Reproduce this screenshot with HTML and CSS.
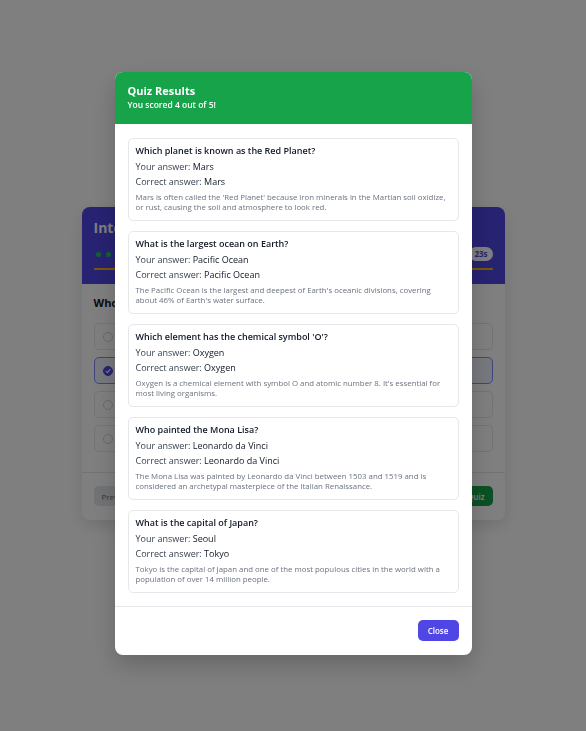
FILE: index.html
```html
<!DOCTYPE html>
<html lang="en">
<head>
<meta charset="utf-8">
<title>Quiz</title>
<link rel="stylesheet" href="styles.css">
</head>
<body>
<div class="page">
  <div class="quiz">
    <div class="quiz-head">
      <div class="quiz-title">Interactive Quiz</div>
      <div class="quiz-meta">
        <div class="dots">
          <span class="dot done"></span><span class="dot done"></span><span class="dot done"></span><span class="dot cur"></span><span class="dot"></span>
        </div>
        <span class="timer">23s</span>
      </div>
      <div class="timebar"><div class="timebar-fill"></div></div>
    </div>
    <div class="quiz-body">
      <div class="q">Who painted the Mona Lisa?</div>
      <div class="opts">
        <div class="opt"><span class="radio"></span>Vincent van Gogh</div>
        <div class="opt sel"><span class="radio on"><svg viewBox="0 0 10 10" width="8" height="8"><path d="M2.5 5.2 L4.3 7 L7.6 3" fill="none" stroke="#fff" stroke-width="1.3" stroke-linecap="round" stroke-linejoin="round"/></svg></span>Leonardo da Vinci</div>
        <div class="opt"><span class="radio"></span>Pablo Picasso</div>
        <div class="opt"><span class="radio"></span>Michelangelo</div>
      </div>
    </div>
    <div class="quiz-foot">
      <button class="btn-prev">Previous</button>
      <button class="btn-submit">Submit Quiz</button>
    </div>
  </div>
</div>

<div class="overlay">
  <div class="modal">
    <div class="modal-head">
      <div class="modal-title">Quiz Results</div>
      <div class="modal-sub">You scored 4 out of 5!</div>
    </div>
    <div class="modal-body">
      <div class="res">
        <div class="res-q">Which planet is known as the Red Planet?</div>
        <div class="res-a">Your answer: <b>Mars</b></div>
        <div class="res-a">Correct answer: <b>Mars</b></div>
        <div class="res-x">Mars is often called the 'Red Planet' because iron minerals in the Martian soil oxidize, or rust, causing the soil and atmosphere to look red.</div>
      </div>
      <div class="res">
        <div class="res-q">What is the largest ocean on Earth?</div>
        <div class="res-a">Your answer: <b>Pacific Ocean</b></div>
        <div class="res-a">Correct answer: <b>Pacific Ocean</b></div>
        <div class="res-x">The Pacific Ocean is the largest and deepest of Earth's oceanic divisions, covering about 46% of Earth's water surface.</div>
      </div>
      <div class="res">
        <div class="res-q">Which element has the chemical symbol 'O'?</div>
        <div class="res-a">Your answer: <b>Oxygen</b></div>
        <div class="res-a">Correct answer: <b>Oxygen</b></div>
        <div class="res-x">Oxygen is a chemical element with symbol O and atomic number 8. It's essential for most living organisms.</div>
      </div>
      <div class="res">
        <div class="res-q">Who painted the Mona Lisa?</div>
        <div class="res-a">Your answer: <b>Leonardo da Vinci</b></div>
        <div class="res-a">Correct answer: <b>Leonardo da Vinci</b></div>
        <div class="res-x">The Mona Lisa was painted by Leonardo da Vinci between 1503 and 1519 and is considered an archetypal masterpiece of the Italian Renaissance.</div>
      </div>
      <div class="res">
        <div class="res-q">What is the capital of Japan?</div>
        <div class="res-a">Your answer: <b>Seoul</b></div>
        <div class="res-a">Correct answer: <b>Tokyo</b></div>
        <div class="res-x">Tokyo is the capital of Japan and one of the most populous cities in the world with a population of over 14 million people.</div>
      </div>
    </div>
    <div class="modal-foot">
      <button class="btn-close">Close</button>
    </div>
  </div>
</div>
</body>
</html>
```

FILE: styles.css
```css
* { box-sizing: border-box; }
html, body { margin: 0; padding: 0; }
body {
  background: #ffffff;
  font-family: "Open Sans", "Liberation Sans", sans-serif;
  color: #111827;
}
.page {
  min-height: 731px;
  display: flex;
  justify-content: center;
  align-items: flex-start;
  padding-top: 207px;
}
.quiz {
  width: 423px;
  background: #fff;
  border-radius: 8px;
  box-shadow: 0 6px 16px rgba(0,0,0,0.12);
  overflow: hidden;
}
.quiz-head {
  background: #4f46e5;
  padding: 12px 12px 14px;
  height: 77px;
  display: flex;
  flex-direction: column;
}
.quiz-title {
  color: #fff;
  font-weight: 700;
  font-size: 14px;
  line-height: 18px;
}
.quiz-meta {
  margin-top: 10px;
  display: flex;
  justify-content: space-between;
  align-items: center;
  height: 14px;
}
.dots { display: flex; gap: 5px; padding-left: 2px; }
.dot { width: 5px; height: 5px; border-radius: 50%; background: #a5b4fc; display: block; }
.dot.done { background: #22c55e; }
.dot.cur { background: #ffffff; }
.timer {
  background: #fff;
  color: #4f46e5;
  font-weight: 700;
  font-size: 8px;
  line-height: 14px;
  padding: 0 5px;
  border-radius: 7px;
}
.timebar { margin-top: 7px; height: 3px; background: #818cf8; border-radius: 2px; }
.timebar-fill { height: 100%; width: 100%; background: #eab308; border-radius: 2px; }
.quiz-body { padding: 12px 12px 20px; }
.q { font-size: 11px; font-weight: 700; line-height: 14px; margin-bottom: 13px; }
.opts { display: flex; flex-direction: column; gap: 7px; }
.opt {
  height: 27px;
  border: 1px solid #e5e7eb;
  border-radius: 5px;
  display: flex;
  align-items: center;
  padding: 0 8px;
  gap: 8px;
  font-size: 9px;
}
.opt.sel { background: #eef2ff; border-color: #818cf8; }
.radio { width: 10px; height: 10px; border-radius: 50%; border: 1px solid #d1d5db; display: flex; align-items: center; justify-content: center; }
.radio.on { background: #4f46e5; border-color: #4f46e5; }
.quiz-foot {
  border-top: 1px solid #e5e7eb;
  padding: 13px 12px 14px;
  display: flex;
  justify-content: space-between;
}
button { font-family: inherit; border: none; cursor: pointer; }
.btn-prev { background: #e5e7eb; color: #6b7280; font-size: 8px; height: 20px; padding: 0 8px; border-radius: 5px; font-weight: 500; }
.btn-submit { background: #16a34a; color: #fff; font-size: 8px; height: 20px; padding: 0 8px; border-radius: 5px; font-weight: 600; }

.overlay {
  position: fixed;
  inset: 0;
  background: rgba(0,0,0,0.5);
  display: flex;
  justify-content: center;
  align-items: flex-start;
  padding-top: 72px;
}
.modal {
  width: 357px;
  background: #fff;
  border-radius: 8px;
  overflow: hidden;
  box-shadow: 0 10px 25px rgba(0,0,0,0.2);
}
.modal-head {
  background: #16a34a;
  color: #fff;
  padding: 11px 13px 13px;
  height: 52px;
}
.modal-title { font-size: 11px; line-height: 16px; font-weight: 700; }
.modal-sub { font-size: 8.5px; line-height: 12px; font-weight: 600; }
.modal-body {
  padding: 14px 13px 13px;
  display: flex;
  flex-direction: column;
  gap: 10px;
}
.res {
  border: 1px solid #e5e7eb;
  border-radius: 5px;
  padding: 6px 6px 8px 7px;
}
.res-q { font-size: 9px; line-height: 12px; font-weight: 600; color: #111827; margin-bottom: 4px; }
.res-a { font-size: 9px; line-height: 12px; color: #374151; margin-bottom: 3px; }
.res-a b { font-weight: 500; color: #111827; }
.res-x { font-size: 7.85px; line-height: 9.5px; color: #6b7280; margin-top: 5px; }
.modal-foot {
  border-top: 1px solid #e5e7eb;
  padding: 13px 13px 14px;
  display: flex;
  justify-content: flex-end;
}
.btn-close {
  background: #4f46e5;
  color: #fff;
  font-size: 8px;
  font-weight: 600;
  height: 21px;
  width: 41px;
  border-radius: 5px;
  padding: 0;
}
```
